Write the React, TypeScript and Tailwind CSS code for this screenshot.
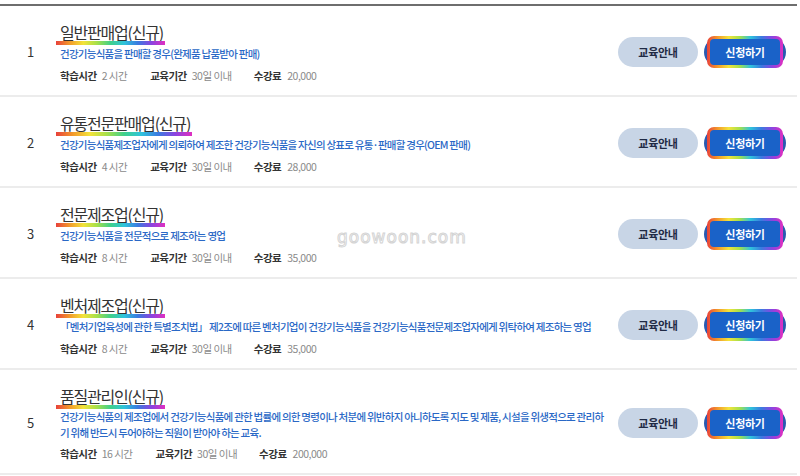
import React from "react";

type Item = {
  no: number;
  title: string;
  desc: React.ReactNode;
  hours: string;
  period: string;
  fee: string;
  tight?: boolean;
};

const items: Item[] = [
  { no: 1, title: "일반판매업(신규)", desc: "건강기능식품을 판매할 경우(완제품 납품받아 판매)", hours: "2 시간", period: "30일 이내", fee: "20,000" },
  { no: 2, title: "유통전문판매업(신규)", desc: "건강기능식품제조업자에게 의뢰하여 제조한 건강기능식품을 자신의 상표로 유통·판매할 경우(OEM 판매)", hours: "4 시간", period: "30일 이내", fee: "28,000" },
  { no: 3, title: "전문제조업(신규)", desc: "건강기능식품을 전문적으로 제조하는 영업", hours: "8 시간", period: "30일 이내", fee: "35,000" },
  { no: 4, title: "벤처제조업(신규)", desc: "「벤처기업육성에 관한 특별조치법」 제2조에 따른 벤처기업이 건강기능식품을 건강기능식품전문제조업자에게 위탁하여 제조하는 영업", hours: "8 시간", period: "30일 이내", fee: "35,000" },
  {
    no: 5,
    title: "품질관리인(신규)",
    desc: (
      <>
        건강기능식품의 제조업에서 건강기능식품에 관한 법률에 의한 명령이나 처분에 위반하지 아니하도록 지도 및 제품, 시설을 위생적으로 관리하
        <br />기 위해 반드시 두어야하는 직원이 받아야 하는 교육.
      </>
    ),
    hours: "16 시간",
    period: "30일 이내",
    fee: "200,000",
    tight: true,
  },
];

function Row({ item }: { item: Item }) {
  return (
    <div className="flex items-center border-b-2 border-[#ececec] pt-[14px] pb-[11px]">
      <div className="w-[60px] shrink-0 text-center text-[13px] text-[#333] pl-[1px]">{item.no}</div>
      <div className="flex-1 min-w-0">
        <div className="inline-flex flex-col -ml-[4px]">
          <div className="pl-[4px] pr-[2px] text-[16px] leading-[20px] tracking-[-1.2px] text-[#333]">{item.title}</div>
          <div className="-mt-[1px] h-[4px] w-full bg-[linear-gradient(to_right,#e8413b,#f39a2a,#f3e33a,#a6e04a,#3fd08a,#2fc4dc,#3a7be0,#8a44e0,#e02fc0)]" />
        </div>
        <div
          className={
            item.tight
              ? "max-w-[580px] whitespace-nowrap text-[10.5px] font-medium leading-[16px] tracking-[-0.75px] text-[#2a68c6]"
              : "max-w-[580px] whitespace-nowrap text-[10.5px] font-medium leading-[17px] tracking-[-0.75px] text-[#2a68c6]"
          }
        >
          {item.desc}
        </div>
        <div className={item.tight ? "mt-[4px] flex items-center text-[10.5px] leading-[17px] tracking-[-0.5px]" : "mt-[5px] flex items-center text-[10.5px] leading-[17px] tracking-[-0.5px]"}>
          <span className="font-bold text-[#333]">학습시간</span>
          <span className="ml-[5px] text-[#8a8a8a]">{item.hours}</span>
          <span className="ml-[23px] font-bold text-[#333]">교육기간</span>
          <span className="ml-[5px] text-[#8a8a8a]">{item.period}</span>
          <span className="ml-[22px] font-bold text-[#333]">수강료</span>
          <span className="ml-[6px] text-[#8a8a8a]">{item.fee}</span>
        </div>
      </div>
      <div className="flex shrink-0 items-center gap-[6px] pr-[11px]">
        <button className="flex h-[30px] w-[80px] items-center justify-center rounded-full bg-[#c8d5e6] text-[11px] font-bold tracking-[-0.3px] text-[#1f2a44]">
          교육안내
        </button>
        <div className="flex h-[30px] w-[82px] items-center justify-center rounded-full bg-[#2a5ab0]">
          <div className="h-[32px] w-[76px] shrink-0 rounded-[7px] bg-[linear-gradient(to_right,#e8413b,#f39a2a,#f3e33a,#a6e04a,#2fc4dc,#3a7be0,#8a44e0,#e02fc0)] p-[3px]">
            <div className="flex h-full w-full items-center justify-center rounded-[4px] bg-[#1a62c8] text-[11px] font-bold tracking-[-0.3px] text-white">
              신청하기
            </div>
          </div>
        </div>
      </div>
    </div>
  );
}

export default function App() {
  return (
    <div className="relative h-[476px] w-[800px] overflow-hidden bg-white pt-[4px] font-['Noto_Sans_CJK_KR','Noto_Sans',sans-serif]">
      <div className="w-[797px] border-t-2 border-[#6e6e6e]">
        {items.map((it) => (
          <Row key={it.no} item={it} />
        ))}
      </div>
      <div className="pointer-events-none absolute left-[337px] top-[225px] font-['DejaVu_Sans',sans-serif] text-[17px] tracking-[1px] text-white [-webkit-text-stroke:1px_#d4d4d4]">
        goowoon.com
      </div>
    </div>
  );
}
